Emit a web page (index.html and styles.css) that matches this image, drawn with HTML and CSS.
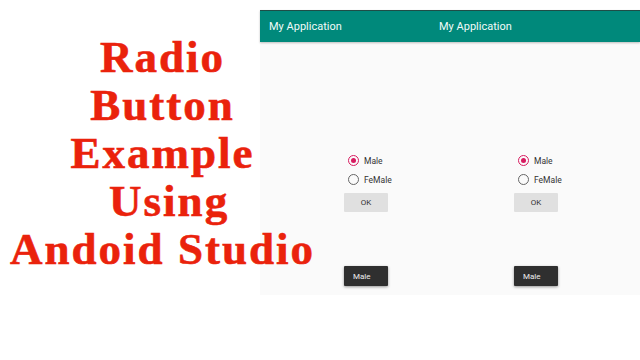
FILE: index.html
```html
<!DOCTYPE html>
<html>
<head>
  <title>Radio Button Example Using Andoid Studio</title>
  <link rel="stylesheet" href="styles.css">
</head>
<body>
  <div class="title">
    <p>Radio</p>
    <p>Button</p>
    <p>Example</p>
    <p>&nbsp;Using</p>
    <p>Andoid Studio</p>
  </div>

  <div class="device">
    <div class="toolbar">
      <span class="app-name">My Application</span>
      <span class="app-name">My Application</span>
    </div>
    <div class="screens">
      <div class="screen">
        <div class="radio-group">
          <label class="radio checked"><span class="dot"></span>Male</label>
          <label class="radio"><span class="dot"></span>FeMale</label>
        </div>
        <div class="btn btn-ok">OK</div>
        <div class="spacer"></div>
        <div class="btn btn-dark">Male</div>
      </div>
      <div class="screen">
        <div class="radio-group">
          <label class="radio checked"><span class="dot"></span>Male</label>
          <label class="radio"><span class="dot"></span>FeMale</label>
        </div>
        <div class="btn btn-ok">OK</div>
        <div class="spacer"></div>
        <div class="btn btn-dark">Male</div>
      </div>
    </div>
  </div>
</body>
</html>
```

FILE: styles.css
```css
body {
  margin: 0;
  width: 640px;
  height: 360px;
  background: #fff;
  display: flex;
  align-items: flex-start;
  overflow: hidden;
}

.title {
  width: 316px;
  margin-right: -56px;
  padding-top: 33px;
  padding-left: 9px;
  box-sizing: border-box;
  position: relative;
  z-index: 2;
  text-align: center;
  color: #ea220c;
  font-family: "Liberation Serif", serif;
  font-weight: bold;
  font-size: 45px;
  letter-spacing: 2px;
  line-height: 48px;
  -webkit-text-stroke: 0.6px #ea220c;
}

.title p {
  margin: 0;
  white-space: nowrap;
}

.device {
  flex: 1;
  margin-top: 10px;
  height: 285px;
  background: #fafafa;
  display: flex;
  flex-direction: column;
  font-family: Roboto, "Noto Sans", sans-serif;
}

.toolbar {
  height: 31px;
  background: #00897b;
  border-top: 1px solid #1f4d47;
  box-shadow: 0 1px 2px rgba(0, 0, 0, 0.25);
  display: flex;
  align-items: center;
}

.app-name {
  width: 170px;
  padding-left: 9px;
  box-sizing: border-box;
  color: #f2fbf9;
  font-size: 11px;
}

.screens {
  flex: 1;
  display: flex;
}

.screen {
  width: 170px;
  padding: 112px 0 9px 84px;
  box-sizing: border-box;
  display: flex;
  flex-direction: column;
  align-items: flex-start;
}

.radio-group {
  display: flex;
  flex-direction: column;
  gap: 6px;
  padding-left: 4px;
}

.radio {
  display: flex;
  align-items: center;
  gap: 5px;
  height: 13px;
  font-size: 8.5px;
  color: #333;
}

.dot {
  width: 9px;
  height: 9px;
  border: 1.5px solid #666;
  border-radius: 50%;
  display: flex;
  align-items: center;
  justify-content: center;
}

.checked .dot {
  border-color: #d81b60;
}

.checked .dot::after {
  content: "";
  width: 5px;
  height: 5px;
  border-radius: 50%;
  background: #d81b60;
}

.btn {
  width: 44px;
  height: 19px;
  font-size: 8px;
  display: flex;
  align-items: center;
  border-radius: 1px;
}

.btn-ok {
  margin-top: 7px;
  background: #e0e0e0;
  color: #333;
  justify-content: center;
}

.spacer {
  flex: 1;
}

.btn-dark {
  height: 20px;
  background: #2f2f2f;
  color: #eee;
  padding-left: 9px;
  box-sizing: border-box;
  box-shadow: 0 1px 3px rgba(0, 0, 0, 0.4);
}
```
